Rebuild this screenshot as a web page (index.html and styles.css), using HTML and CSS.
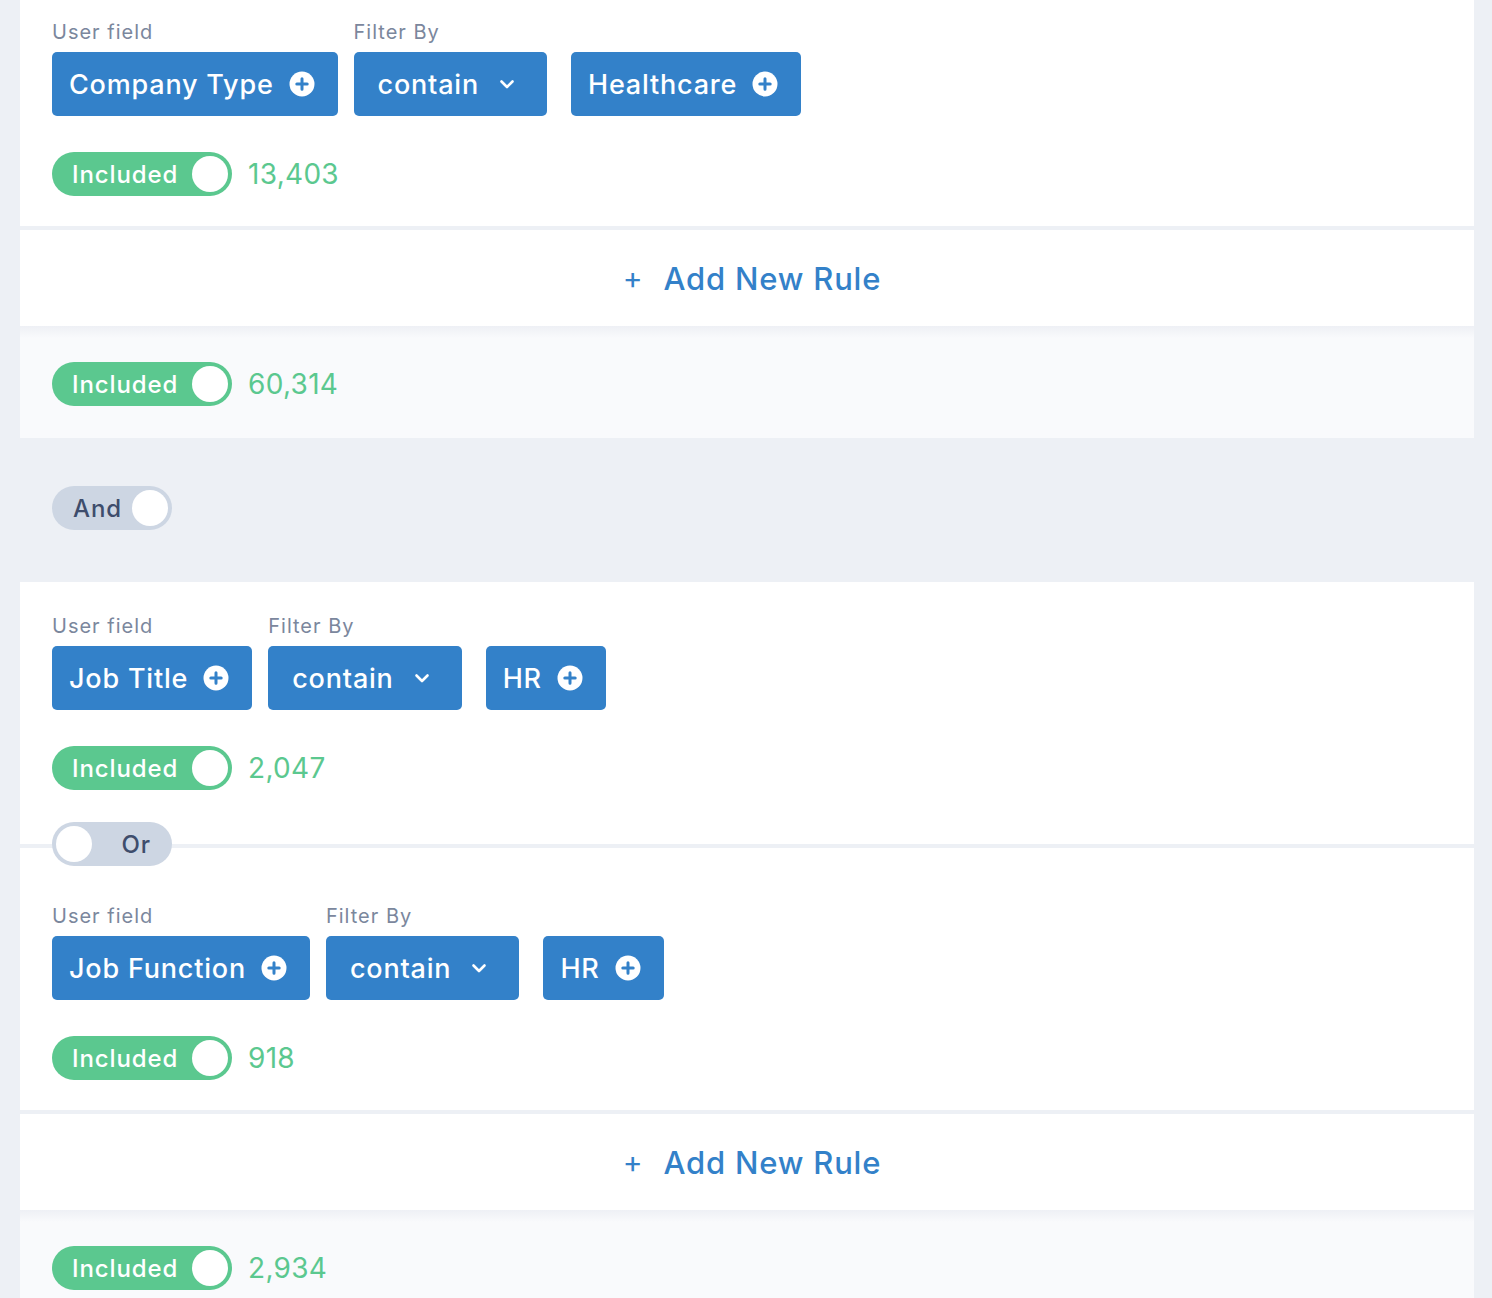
FILE: index.html
```html
<!DOCTYPE html>
<html lang="en">
<head>
<meta charset="utf-8">
<title>Rules</title>
<link rel="stylesheet" href="styles.css">
</head>
<body>
<div class="page">
  <section class="group">
    <div class="rule">
      <div class="fields">
        <div class="field">
          <div class="label">User field</div>
          <div class="btn">Company Type
            <svg class="ico-plus" viewBox="0 0 26 26" width="26" height="26"><circle cx="13" cy="13" r="12.5" fill="#fff"/><path d="M13 7.8v10.4M7.8 13h10.4" stroke="#3381c9" stroke-width="3" stroke-linecap="round"/></svg>
          </div>
        </div>
        <div class="field">
          <div class="label">Filter By</div>
          <div class="btn btn-select">contain
            <svg class="ico-chev" viewBox="0 0 24 24" width="24" height="24"><path d="M6.5 9.5L12 15l5.5-5.5" fill="none" stroke="#fff" stroke-width="2.6" stroke-linecap="round" stroke-linejoin="round"/></svg>
          </div>
        </div>
        <div class="field field-value">
          <div class="label">&nbsp;</div>
          <div class="btn">Healthcare
            <svg class="ico-plus" viewBox="0 0 26 26" width="26" height="26"><circle cx="13" cy="13" r="12.5" fill="#fff"/><path d="M13 7.8v10.4M7.8 13h10.4" stroke="#3381c9" stroke-width="3" stroke-linecap="round"/></svg>
          </div>
        </div>
      </div>
      <div class="status">
        <span class="toggle toggle-on"><span class="toggle-text">Included</span><span class="knob"></span></span>
        <span class="count">13,403</span>
      </div>
    </div>
    <div class="divider"></div>
    <div class="add-rule"><span class="add-plus">+</span><span>Add New Rule</span></div>
    <div class="summary">
      <span class="toggle toggle-on"><span class="toggle-text">Included</span><span class="knob"></span></span>
      <span class="count">60,314</span>
    </div>
  </section>

  <div class="joiner">
    <span class="toggle toggle-off toggle-short"><span class="toggle-text">And</span><span class="knob"></span></span>
  </div>

  <section class="group">
    <div class="rule rule-first">
      <div class="fields">
        <div class="field">
          <div class="label">User field</div>
          <div class="btn">Job Title
            <svg class="ico-plus" viewBox="0 0 26 26" width="26" height="26"><circle cx="13" cy="13" r="12.5" fill="#fff"/><path d="M13 7.8v10.4M7.8 13h10.4" stroke="#3381c9" stroke-width="3" stroke-linecap="round"/></svg>
          </div>
        </div>
        <div class="field">
          <div class="label">Filter By</div>
          <div class="btn btn-select">contain
            <svg class="ico-chev" viewBox="0 0 24 24" width="24" height="24"><path d="M6.5 9.5L12 15l5.5-5.5" fill="none" stroke="#fff" stroke-width="2.6" stroke-linecap="round" stroke-linejoin="round"/></svg>
          </div>
        </div>
        <div class="field field-value">
          <div class="label">&nbsp;</div>
          <div class="btn">HR
            <svg class="ico-plus" viewBox="0 0 26 26" width="26" height="26"><circle cx="13" cy="13" r="12.5" fill="#fff"/><path d="M13 7.8v10.4M7.8 13h10.4" stroke="#3381c9" stroke-width="3" stroke-linecap="round"/></svg>
          </div>
        </div>
      </div>
      <div class="status">
        <span class="toggle toggle-on"><span class="toggle-text">Included</span><span class="knob"></span></span>
        <span class="count">2,047</span>
      </div>
    </div>
    <div class="divider divider-or">
      <span class="toggle toggle-off toggle-short toggle-left or-toggle"><span class="knob"></span><span class="toggle-text">Or</span></span>
    </div>
    <div class="rule rule-next">
      <div class="fields">
        <div class="field">
          <div class="label">User field</div>
          <div class="btn">Job Function
            <svg class="ico-plus" viewBox="0 0 26 26" width="26" height="26"><circle cx="13" cy="13" r="12.5" fill="#fff"/><path d="M13 7.8v10.4M7.8 13h10.4" stroke="#3381c9" stroke-width="3" stroke-linecap="round"/></svg>
          </div>
        </div>
        <div class="field">
          <div class="label">Filter By</div>
          <div class="btn btn-select">contain
            <svg class="ico-chev" viewBox="0 0 24 24" width="24" height="24"><path d="M6.5 9.5L12 15l5.5-5.5" fill="none" stroke="#fff" stroke-width="2.6" stroke-linecap="round" stroke-linejoin="round"/></svg>
          </div>
        </div>
        <div class="field field-value">
          <div class="label">&nbsp;</div>
          <div class="btn">HR
            <svg class="ico-plus" viewBox="0 0 26 26" width="26" height="26"><circle cx="13" cy="13" r="12.5" fill="#fff"/><path d="M13 7.8v10.4M7.8 13h10.4" stroke="#3381c9" stroke-width="3" stroke-linecap="round"/></svg>
          </div>
        </div>
      </div>
      <div class="status">
        <span class="toggle toggle-on"><span class="toggle-text">Included</span><span class="knob"></span></span>
        <span class="count">918</span>
      </div>
    </div>
    <div class="divider"></div>
    <div class="add-rule"><span class="add-plus">+</span><span>Add New Rule</span></div>
    <div class="summary">
      <span class="toggle toggle-on"><span class="toggle-text">Included</span><span class="knob"></span></span>
      <span class="count">2,934</span>
    </div>
  </section>
</div>
</body>
</html>
```

FILE: styles.css
```css
html, body {
  margin: 0;
  padding: 0;
}
body {
  background: #edf0f5;
  font-family: Inter, "Noto Sans", "Liberation Sans", sans-serif;
  color: #3f4d6b;
  overflow: hidden;
}
.page {
  margin: -12px 18px 0 20px;
}
.group {
  display: flex;
  flex-direction: column;
}
.rule {
  background: #fff;
  padding: 34px 32px 30px;
}
.rule-first {
  padding-bottom: 54px;
}
.rule-next {
  padding-top: 58px;
}
.fields {
  display: flex;
  gap: 16px;
  align-items: flex-start;
}
.field-value {
  margin-left: 8px;
}
.label {
  font-size: 20px;
  line-height: 20px;
  height: 20px;
  color: #7b879d;
  margin-bottom: 10px;
  white-space: nowrap;
  letter-spacing: 1px;
}
.btn {
  display: flex;
  align-items: center;
  gap: 15px;
  height: 64px;
  box-sizing: border-box;
  padding: 0 23px 0 17px;
  background: #3381c9;
  border-radius: 5px;
  color: #fff;
  font-size: 27px;
  font-weight: 500;
  white-space: nowrap;
  letter-spacing: 0.8px;
}
.btn-select {
  padding: 0 28px 0 24px;
  gap: 16px;
}
.ico-plus, .ico-chev {
  flex: none;
  display: block;
}
.status {
  display: flex;
  align-items: center;
  margin-top: 36px;
}
.toggle {
  display: inline-flex;
  align-items: center;
  justify-content: space-between;
  box-sizing: border-box;
  width: 180px;
  height: 44px;
  border-radius: 22px;
  padding: 0 4px 0 20px;
  font-size: 24px;
  font-weight: 500;
  letter-spacing: 0.9px;
  flex: none;
}
.toggle-on {
  background: #5bc88f;
  color: #fff;
}
.toggle-off {
  background: #cdd6e3;
  color: #3e4d6c;
}
.toggle-short {
  width: 120px;
  padding-left: 21px;
}
.toggle-left {
  padding: 0 21px 0 4px;
}
.knob {
  width: 36px;
  height: 36px;
  border-radius: 50%;
  background: #fff;
  flex: none;
}
.count {
  margin-left: 16px;
  font-size: 28px;
  color: #5bc88f;
  font-weight: 400;
  letter-spacing: 0.3px;
}
.divider {
  height: 4px;
  background: #edf0f5;
  position: relative;
}
.or-toggle {
  position: absolute;
  left: 32px;
  top: -22px;
}
.add-rule {
  background: #fff;
  height: 96px;
  display: flex;
  align-items: center;
  justify-content: center;
  gap: 20px;
  color: #3381c9;
  font-size: 31px;
  font-weight: 500;
  letter-spacing: 0.8px;
  padding-left: 10px;
}
.add-plus {
  font-size: 30px;
  font-weight: 400;
}
.summary {
  display: flex;
  align-items: center;
  padding: 36px 32px 32px;
  background: linear-gradient(to bottom, #eef0f5 0, #f9fafc 12px, #f9fafc 100%);
}
.joiner {
  padding: 48px 32px 52px;
  display: flex;
}
```
